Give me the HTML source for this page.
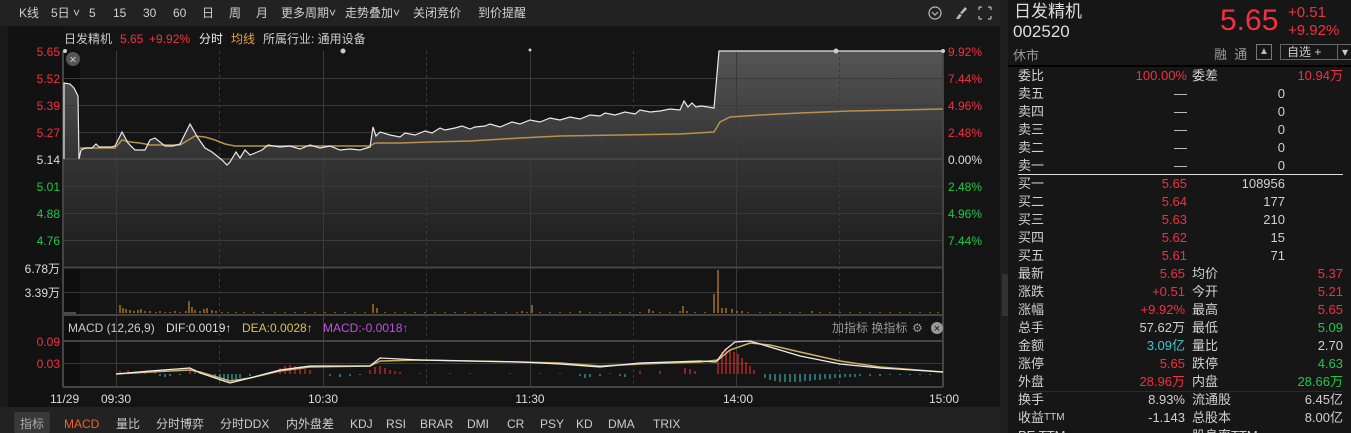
<!DOCTYPE html>
<html><head><meta charset="utf-8"><style>
*{margin:0;padding:0;box-sizing:border-box}
html,body{width:1351px;height:433px;overflow:hidden}
body{background:#141414;font-family:"Liberation Sans","Noto Sans CJK SC",sans-serif;position:relative;color:#ccc}
.a{position:absolute;white-space:nowrap}
#rp{position:absolute;left:1008px;top:0;width:343px;height:433px;background:#161616;overflow:hidden}
.row{position:absolute;left:10px;width:325px;height:18px;font-size:13px;line-height:18px}
.row span{position:absolute}
.r{color:#f23040}.g{color:#1ec84a}.c{color:#3cc8d2}.w{color:#d0d0d0}
</style></head><body>
<svg class="a" style="left:0;top:0" width="1005" height="433" font-family="Liberation Sans,Noto Sans CJK SC,sans-serif">
<defs>
<linearGradient id="fg" x1="0" y1="51" x2="0" y2="267" gradientUnits="userSpaceOnUse"><stop offset="0" stop-color="#555"/><stop offset="0.5" stop-color="#333"/><stop offset="1" stop-color="#1c1c1c"/></linearGradient>
<linearGradient id="bg2" x1="0" y1="159" x2="0" y2="267" gradientUnits="userSpaceOnUse"><stop offset="0" stop-color="#262626"/><stop offset="1" stop-color="#1a1a1a"/></linearGradient>
</defs>
<rect x="0" y="0" width="1005" height="26" fill="#222"/>
<rect x="0" y="26" width="8" height="381" fill="#1a1a1a"/>
<rect x="8" y="26" width="55" height="381" fill="#121212"/>
<rect x="63" y="159" width="880" height="108" fill="url(#bg2)"/>
<rect x="63" y="51" width="17" height="336" fill="#0e0e0e"/>
<polygon fill="url(#fg)" points="64,83 70,84 74,88 78,96 79,159 81,150 86,148 92,148 96,144 99,147 112,147 115,146 122,132 128,143 135,150 145,150 150,140 155,138 165,146 173,146 180,144 190,124 198,138 205,148 212,152 222,160 227,165 230,162 236,152 240,158 245,150 250,155 255,153 262,150 268,145 280,147 290,146 300,149 310,145 320,148 330,146 340,150 350,149 360,150 370,147 373,127 376,136 380,132 390,135 400,137 405,133 415,135 425,131 432,133 440,128 445,130 455,128 462,126 470,129 475,127 485,126 490,124 500,127 512,122 520,124 530,120 540,122 550,118 560,120 570,117 580,119 590,115 600,116 605,113 615,115 625,112 635,114 640,110 650,112 660,111 670,109 680,110 684,101 688,107 692,103 696,107 701,106 708,107 714,108 719,51 943,51 943,267 64,267"/>
<g stroke="#3a3a3a" stroke-width="1">
<line x1="63" y1="78.5" x2="943" y2="78.5"/><line x1="63" y1="105.5" x2="943" y2="105.5"/><line x1="63" y1="132.5" x2="943" y2="132.5"/><line x1="63" y1="186.5" x2="943" y2="186.5"/><line x1="63" y1="213.5" x2="943" y2="213.5"/><line x1="63" y1="240.5" x2="943" y2="240.5"/>
<line x1="63" y1="292.5" x2="943" y2="292.5"/><line x1="63" y1="363.5" x2="943" y2="363.5"/>
<line x1="116.5" y1="51" x2="116.5" y2="387"/><line x1="323.5" y1="51" x2="323.5" y2="387"/><line x1="530.5" y1="51" x2="530.5" y2="387"/><line x1="736.5" y1="51" x2="736.5" y2="387"/>
</g>
<g stroke="#3a3a3a" stroke-dasharray="3,3"><line x1="219.5" y1="51" x2="219.5" y2="387"/><line x1="426.5" y1="51" x2="426.5" y2="387"/><line x1="633.5" y1="51" x2="633.5" y2="387"/><line x1="839.5" y1="51" x2="839.5" y2="387"/></g>
<g stroke="#444" stroke-width="2" fill="none">
<line x1="63" y1="159" x2="943" y2="159"/><line x1="63" y1="267.5" x2="943" y2="267.5"/><line x1="63" y1="315" x2="943" y2="315"/><line x1="63" y1="341" x2="943" y2="341"/><line x1="63" y1="387" x2="943" y2="387"/>
<line x1="943" y1="51" x2="943" y2="387"/><line x1="63" y1="51" x2="63" y2="387"/>
</g>
<polyline fill="none" stroke="#b8924c" stroke-width="1.5" points="80,148 115,148 122,140 130,142 140,143 150,145 180,145 195,136 205,137 215,140 225,144 235,146 250,146 370,146 375,143 400,143 430,142 470,141 520,138 560,136 620,135 680,134 714,132 720,122 730,117 760,115 800,113 850,111 900,110 943,109"/>
<polyline fill="none" stroke="#e8e8e8" stroke-width="1.2" points="64,159 64,83 70,84 74,88 78,96 79,159 81,150 86,148 92,148 96,144 99,147 112,147 115,146 122,132 128,143 135,150 145,150 150,140 155,138 165,146 173,146 180,144 190,124 198,138 205,148 212,152 222,160 227,165 230,162 236,152 240,158 245,150 250,155 255,153 262,150 268,145 280,147 290,146 300,149 310,145 320,148 330,146 340,150 350,149 360,150 370,147 373,127 376,136 380,132 390,135 400,137 405,133 415,135 425,131 432,133 440,128 445,130 455,128 462,126 470,129 475,127 485,126 490,124 500,127 512,122 520,124 530,120 540,122 550,118 560,120 570,117 580,119 590,115 600,116 605,113 615,115 625,112 635,114 640,110 650,112 660,111 670,109 680,110 684,101 688,107 692,103 696,107 701,106 708,107 714,108 719,51 943,51"/>
<circle cx="73" cy="59" r="7" fill="#555"/><text x="73" y="63.5" fill="#ccc" font-size="12" text-anchor="middle">×</text>
<g fill="#ccc"><circle cx="343" cy="51" r="2.5"/><circle cx="836" cy="51" r="2.5"/><circle cx="65" cy="51" r="2"/><circle cx="943" cy="51" r="2"/><circle cx="530" cy="50" r="1.5"/></g>
<g stroke="#f0a020" stroke-width="1">
<path d="M120 313v-8M123 313v-5M126 313v-4M130 313v-3M134 313v-2M138 313v-3M141 313v-4M145 313v-2M150 313v-2M156 313v-1M160 313v-2M165 313v-1M170 313v-1M175 313v-2M180 313v-1M186 313v-2M189 313v-12M192 313v-6M195 313v-3M200 313v-2M204 313v-4M207 313v-5M212 313v-3M216 313v-2M222 313v-1M228 313v-1M236 313v-1M244 313v-1M254 313v-1M263 313v-1M275 313v-1M285 313v-1M295 313v-1M305 313v-1M315 313v-1M325 313v-1M335 313v-1M345 313v-1M355 313v-1M365 313v-1M373 313v-9M377 313v-5M385 313v-1M395 313v-1M405 313v-1M415 313v-1M425 313v-1M435 313v-1M445 313v-1M455 313v-1M465 313v-1M475 313v-1M485 313v-1M495 313v-1M506 313v-1M517 313v-1M522 313v-2M527 313v-1M532 313v-8M540 313v-1M550 313v-1M560 313v-1M570 313v-1M580 313v-2M590 313v-1M600 313v-1M610 313v-1M620 313v-1M630 313v-1M640 313v-1M649 313v-4M653 313v-2M660 313v-1M670 313v-1M680 313v-2M683 313v-7M687 313v-2M695 313v-1M705 313v-1M714 313v-19M718 313v-43M722 313v-5M726 313v-5M732 313v-4M737 313v-2M742 313v-2M748 313v-1M760 313v-1M770 313v-1M780 313v-1M790 313v-1M800 313v-1M812 313v-2M820 313v-1M830 313v-1M840 313v-1M850 313v-1M860 313v-1M870 313v-1M880 313v-1M890 313v-1M900 313v-1M910 313v-1M920 313v-1M930 313v-1M938 313v-1"/>
</g>
<line x1="64" y1="313" x2="76" y2="313" stroke="#888"/>
<g stroke="#ff3030"><path d="M120 374v-3M128 374v-4M136 374v-2M145 374v-2M155 374v-2M190 374v-6M195 374v-5M200 374v-3M270 374v-2M280 374v-6M285 374v-8M290 374v-9M295 374v-8M300 374v-7M305 374v-5M310 374v-4M370 374v-4M375 374v-7M380 374v-8M385 374v-6M390 374v-4M395 374v-3M400 374v-2M420 374v-1M450 374v-1M470 374v-1M510 374v-1M540 374v-1M560 374v-1M610 374v-1M640 374v-3M660 374v-3M685 374v-6M690 374v-5M695 374v-3M718 374v-14M722 374v-22M726 374v-26M730 374v-24M734 374v-22M738 374v-20M742 374v-16M746 374v-12M750 374v-8M754 374v-4"/></g>
<g stroke="#3ccccc"><path d="M160 374v2M165 374v3M170 374v2M180 374v1M210 374v2M215 374v4M220 374v7M224 374v8M228 374v9M232 374v8M236 374v6M240 374v4M250 374v2M330 374v2M340 374v3M350 374v2M360 374v1M580 374v2M585 374v4M590 374v3M600 374v2M620 374v2M625 374v3M765 374v4M770 374v6M775 374v7M780 374v8M785 374v8M790 374v8M795 374v8M800 374v8M805 374v7M810 374v7M815 374v6M820 374v6M825 374v5M830 374v5M835 374v4M840 374v4M845 374v3M850 374v3M855 374v3M860 374v2M870 374v2M880 374v2M890 374v1M900 374v1M910 374v1M920 374v1M930 374v1"/></g>
<polyline fill="none" stroke="#d0b060" stroke-width="1.5" points="116,374 150,372 190,370 200,372 230,381 250,378 280,371 310,367 370,366 380,361 420,360 470,361 520,362 560,363 600,366 640,364 700,362 718,360 730,350 750,343 770,345 800,352 840,361 880,367 943,372"/>
<polyline fill="none" stroke="#eee" stroke-width="1.2" points="116,374 150,371 190,368 200,373 230,383 250,378 280,370 310,366 370,366 380,358 420,360 470,361 520,362 560,364 600,367 640,363 700,361 716,362 725,350 735,342 750,341 770,347 800,356 840,364 880,368 943,372"/>
<g font-size="12" fill="#d0d0d0">
<text x="19" y="17">K线</text><text x="51" y="17">5日 ˅</text><text x="89" y="17">5</text><text x="113" y="17">15</text><text x="143" y="17">30</text><text x="173" y="17">60</text><text x="202" y="17">日</text><text x="229" y="17">周</text><text x="256" y="17">月</text><text x="281" y="17">更多周期˅</text><text x="345" y="17">走势叠加˅</text><text x="413" y="17">关闭竞价</text><text x="478" y="17">到价提醒</text>
</g>
<circle cx="935" cy="13" r="6" fill="none" stroke="#bbb" stroke-width="1.2"/><path d="M932 12l3 3 3-3" stroke="#bbb" fill="none" stroke-width="1.2"/>
<path d="M956 19l3-5 3 1-3 4zM960 13l5-6 2 2-5 5z" fill="#bbb"/>
<path d="M979 7h3M979 7v3M991 7h-3M991 7v3M979 19h3M979 19v-3M991 19h-3M991 19v-3" stroke="#bbb" fill="none" stroke-width="1.2"/>
<g font-size="12"><text x="64" y="43" fill="#ccc">日发精机</text><text x="120" y="43" fill="#f23040">5.65</text><text x="149" y="43" fill="#f23040">+9.92%</text><text x="199" y="43" fill="#eee">分时</text><text x="231" y="43" fill="#e8a040">均线</text><text x="263" y="43" fill="#ccc">所属行业: 通用设备</text></g>
<g font-size="12" text-anchor="end">
<text x="60" y="56" fill="#f23040">5.65</text><text x="60" y="83" fill="#f23040">5.52</text><text x="60" y="110" fill="#f23040">5.39</text><text x="60" y="137" fill="#f23040">5.27</text><text x="60" y="164" fill="#ddd">5.14</text><text x="60" y="191" fill="#1ec84a">5.01</text><text x="60" y="218" fill="#1ec84a">4.88</text><text x="60" y="245" fill="#1ec84a">4.76</text>
<text x="60" y="273" fill="#ddd">6.78万</text><text x="60" y="297" fill="#ddd">3.39万</text>
<text x="60" y="346" fill="#f23040">0.09</text><text x="60" y="368" fill="#f23040">0.03</text>
</g>
<g font-size="12"><text x="948" y="56" fill="#f23040">9.92%</text><text x="948" y="83" fill="#f23040">7.44%</text><text x="948" y="110" fill="#f23040">4.96%</text><text x="948" y="137" fill="#f23040">2.48%</text><text x="948" y="164" fill="#ddd">0.00%</text><text x="948" y="191" fill="#1ec84a">2.48%</text><text x="948" y="218" fill="#1ec84a">4.96%</text><text x="948" y="245" fill="#1ec84a">7.44%</text></g>
<g font-size="12"><text x="68" y="332" fill="#ccc">MACD (12,26,9)</text><text x="166" y="332" fill="#ddd">DIF:0.0019↑</text><text x="242" y="332" fill="#e0c050">DEA:0.0028↑</text><text x="323" y="332" fill="#c050e0">MACD:-0.0018↑</text>
<text x="832" y="332" fill="#999">加指标 换指标</text><text x="912" y="332" fill="#999">⚙</text><circle cx="937" cy="328" r="6" fill="#999"/><text x="937" y="332" fill="#141414" text-anchor="middle" font-size="11">×</text>
<g fill="#ddd"><text x="50" y="403">11/29</text><text x="116" y="403" text-anchor="middle">09:30</text><text x="323" y="403" text-anchor="middle">10:30</text><text x="530" y="403" text-anchor="middle">11:30</text><text x="723" y="403">14:00</text><text x="929" y="403">15:00</text></g>
</g>
<rect x="0" y="407" width="1005" height="26" fill="#222"/>
<rect x="14" y="412" width="36" height="21" rx="2" fill="#383838"/>
<g font-size="12" fill="#ccc"><text x="20" y="428" fill="#aaa">指标</text><text x="64" y="428" fill="#f06030">MACD</text><text x="116" y="428">量比</text><text x="156" y="428">分时博弈</text><text x="220" y="428">分时DDX</text><text x="286" y="428">内外盘差</text><text x="350" y="428">KDJ</text><text x="386" y="428">RSI</text><text x="420" y="428">BRAR</text><text x="467" y="428">DMI</text><text x="507" y="428">CR</text><text x="540" y="428">PSY</text><text x="576" y="428">KD</text><text x="608" y="428">DMA</text><text x="653" y="428">TRIX</text></g>
</svg>
<div class="a" style="left:1000px;top:0;width:8px;height:433px;background:#1e1e1e"></div>
<div class="a" style="left:1002px;top:274px;width:6px;height:42px;background:#333"></div>
<div id="rp">
<div class="a" style="left:6px;top:2px;font-size:17px;line-height:20px;color:#ddd">日发精机</div>
<div class="a" style="left:5px;top:22px;font-size:17px;line-height:20px;color:#ddd">002520</div>
<div class="a" style="left:5px;top:45px;font-size:13px;color:#999">休市</div>
<div class="a" style="left:212px;top:4px;font-size:30px;color:#f23040">5.65</div>
<div class="a" style="left:280px;top:4px;font-size:15px;color:#f23040;line-height:18px">+0.51<br>+9.92%</div>
<div class="a" style="left:206px;top:44px;font-size:13px;color:#999">融&nbsp;&nbsp;通</div>
<div class="a" style="left:248px;top:44px;width:16px;height:16px;border:1px solid #777;color:#bbb;font-size:10px;text-align:center;line-height:14px">▲</div>
<div class="a" style="left:272px;top:44px;width:75px;height:16px;border:1px solid #666;font-size:12px;color:#ccc;line-height:14px;padding-left:6px">自选 +<span style="position:absolute;left:56px;top:0;width:1px;height:14px;background:#666"></span><span style="position:absolute;left:61px">▾</span></div>
<div class="a" style="left:0;top:65px;width:343px;height:2px;background:#000"></div>
<div class="a" style="left:10px;top:174px;width:325px;height:1px;background:#ddd"></div>
<div class="a" style="left:10px;top:391px;width:325px;height:1px;background:#2a2a2a"></div>
<div class="row" style="top:67px"><span class="w">委比</span><span class="r" style="right:156px">100.00%</span><span class="w" style="left:174px">委差</span><span class="r" style="right:0">10.94万</span></div>
<div class="row" style="top:85px"><span class="w">卖五</span><span class="w" style="right:156px">—</span><span class="w" style="right:58px">0</span></div>
<div class="row" style="top:103px"><span class="w">卖四</span><span class="w" style="right:156px">—</span><span class="w" style="right:58px">0</span></div>
<div class="row" style="top:121px"><span class="w">卖三</span><span class="w" style="right:156px">—</span><span class="w" style="right:58px">0</span></div>
<div class="row" style="top:139px"><span class="w">卖二</span><span class="w" style="right:156px">—</span><span class="w" style="right:58px">0</span></div>
<div class="row" style="top:157px"><span class="w">卖一</span><span class="w" style="right:156px">—</span><span class="w" style="right:58px">0</span></div>
<div class="row" style="top:175px"><span class="w">买一</span><span class="r" style="right:156px">5.65</span><span class="w" style="right:58px">108956</span></div>
<div class="row" style="top:193px"><span class="w">买二</span><span class="r" style="right:156px">5.64</span><span class="w" style="right:58px">177</span></div>
<div class="row" style="top:211px"><span class="w">买三</span><span class="r" style="right:156px">5.63</span><span class="w" style="right:58px">210</span></div>
<div class="row" style="top:229px"><span class="w">买四</span><span class="r" style="right:156px">5.62</span><span class="w" style="right:58px">15</span></div>
<div class="row" style="top:247px"><span class="w">买五</span><span class="r" style="right:156px">5.61</span><span class="w" style="right:58px">71</span></div>
<div class="row" style="top:265px"><span class="w">最新</span><span class="r" style="right:158px">5.65</span><span class="w" style="left:174px">均价</span><span class="r" style="right:0">5.37</span></div>
<div class="row" style="top:283px"><span class="w">涨跌</span><span class="r" style="right:158px">+0.51</span><span class="w" style="left:174px">今开</span><span class="r" style="right:0">5.21</span></div>
<div class="row" style="top:301px"><span class="w">涨幅</span><span class="r" style="right:158px">+9.92%</span><span class="w" style="left:174px">最高</span><span class="r" style="right:0">5.65</span></div>
<div class="row" style="top:319px"><span class="w">总手</span><span class="w" style="right:158px">57.62万</span><span class="w" style="left:174px">最低</span><span class="g" style="right:0">5.09</span></div>
<div class="row" style="top:337px"><span class="w">金额</span><span class="c" style="right:158px">3.09亿</span><span class="w" style="left:174px">量比</span><span class="w" style="right:0">2.70</span></div>
<div class="row" style="top:355px"><span class="w">涨停</span><span class="r" style="right:158px">5.65</span><span class="w" style="left:174px">跌停</span><span class="g" style="right:0">4.63</span></div>
<div class="row" style="top:373px"><span class="w">外盘</span><span class="r" style="right:158px">28.96万</span><span class="w" style="left:174px">内盘</span><span class="g" style="right:0">28.66万</span></div>
<div class="row" style="top:391px"><span class="w">换手</span><span class="w" style="right:158px">8.93%</span><span class="w" style="left:174px">流通股</span><span class="w" style="right:0">6.45亿</span></div>
<div class="row" style="top:409px"><span class="w">收益<span style="position:static;font-size:10px;vertical-align:top">TTM</span></span><span class="w" style="right:158px">-1.143</span><span class="w" style="left:174px">总股本</span><span class="w" style="right:0">8.00亿</span></div>
<div class="row" style="top:427px"><span class="w">PE TTM</span><span class="w" style="left:174px">股息率TTM</span></div>
</div>
</body></html>
